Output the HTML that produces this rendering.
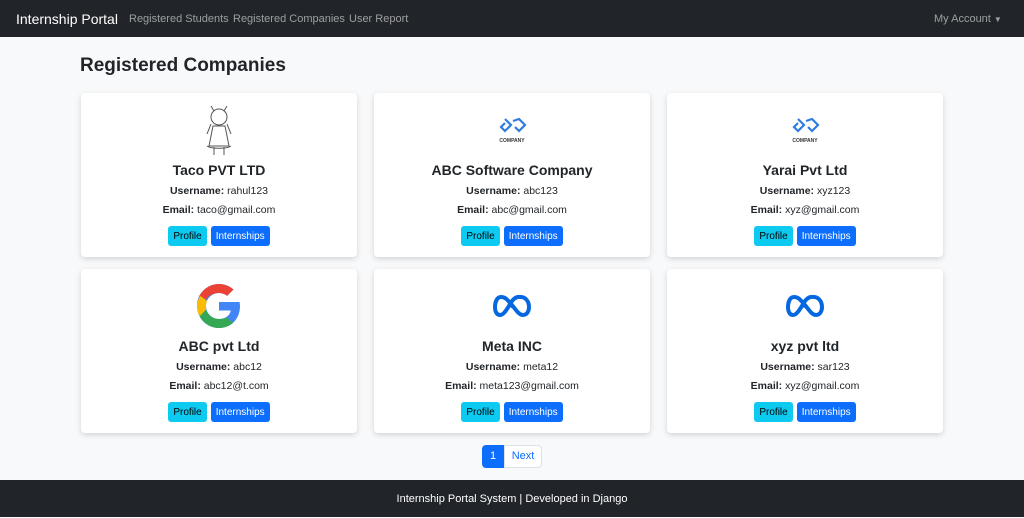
<!DOCTYPE html>
<html><head><meta charset="utf-8"><style>
*{box-sizing:border-box;margin:0;padding:0}
body{width:1024px;height:517px;background:#f8f9fa;font-family:"Liberation Sans",sans-serif;color:#212529;position:relative;overflow:hidden}
.nav{position:absolute;left:0;top:0;width:1024px;height:37px;background:#212529}
.nav span{position:absolute;top:1px;line-height:37px;color:rgba(255,255,255,.55);font-size:11px;white-space:nowrap}
.brand{color:#fff!important;font-size:14px!important;left:16px}
h1{position:absolute;left:80px;top:55px;font-size:19px;font-weight:bold;color:#212529}
.card{position:absolute;width:276px;height:164px;background:#fff;border-radius:4px;box-shadow:0 2px 6px rgba(0,0,0,.15);text-align:center}
.logo{position:absolute;left:0;right:0;top:7px;height:60px;display:flex;justify-content:center;align-items:center}
.t{position:absolute;left:0;right:0;top:69px;font-size:14px;font-weight:bold;color:#212529;line-height:16px}
.u{position:absolute;left:0;right:0;top:91px;font-size:10.5px;line-height:14px}
.e{position:absolute;left:0;right:0;top:110px;font-size:10.5px;line-height:14px}
.b{position:absolute;left:0;right:0;top:133px;height:20px;display:flex;justify-content:center;gap:4px}
.b span{display:block;height:20px;line-height:21px;font-size:10px;padding:0 5px;border-radius:3px}
.p{background:#0dcaf0;color:#000}
.i{background:#0d6efd;color:#fff}
.pg{position:absolute;top:445px;height:23px;line-height:23px;font-size:11px;text-align:center}
.foot{position:absolute;left:0;top:480px;width:1024px;height:37px;background:#212529;color:#fff;font-size:11px;text-align:center;line-height:38px}
</style></head><body>
<div class="nav">
<span class="brand">Internship Portal</span>
<span style="left:129px">Registered Students</span>
<span style="left:233px">Registered Companies</span>
<span style="left:349px">User Report</span>
<span style="left:934px">My Account <span style="position:static;font-size:8px">▼</span></span>
</div>
<h1>Registered Companies</h1>

<div class="card" style="left:81px;top:93px">
<div class="logo"><svg width="40" height="56" viewBox="0 0 40 56" fill="none" stroke="#555" stroke-width="1"><path d="M12 4l3 5M28 4l-3 5"/><circle cx="20" cy="15" r="8"/><path d="M12 22l-4 10M28 22l4 10M14 24h12l4 20H10z"/><path d="M8 44c4 3 20 3 24 0M15 45v8M25 45v8"/></svg></div>
<div class="t">Taco PVT LTD</div>
<div class="u"><b>Username:</b> rahul123</div>
<div class="e"><b>Email:</b> taco@gmail.com</div>
<div class="b"><span class="p">Profile</span><span class="i">Internships</span></div></div>

<div class="card" style="left:374px;top:93px">
<div class="logo"><svg width="34" height="30" viewBox="0 0 34 30"><path d="M10 4l6 6-6 6-4-4 4-4M18 6l6-2 6 6-6 6-4-4" fill="none" stroke="#2f7de1" stroke-width="2.2"/><text x="17" y="27" font-size="5" font-weight="bold" text-anchor="middle" fill="#333" font-family="Liberation Sans">COMPANY</text></svg></div>
<div class="t">ABC Software Company</div>
<div class="u"><b>Username:</b> abc123</div>
<div class="e"><b>Email:</b> abc@gmail.com</div>
<div class="b"><span class="p">Profile</span><span class="i">Internships</span></div></div>

<div class="card" style="left:667px;top:93px">
<div class="logo"><svg width="34" height="30" viewBox="0 0 34 30"><path d="M10 4l6 6-6 6-4-4 4-4M18 6l6-2 6 6-6 6-4-4" fill="none" stroke="#2f7de1" stroke-width="2.2"/><text x="17" y="27" font-size="5" font-weight="bold" text-anchor="middle" fill="#333" font-family="Liberation Sans">COMPANY</text></svg></div>
<div class="t">Yarai Pvt Ltd</div>
<div class="u"><b>Username:</b> xyz123</div>
<div class="e"><b>Email:</b> xyz@gmail.com</div>
<div class="b"><span class="p">Profile</span><span class="i">Internships</span></div></div>

<div class="card" style="left:81px;top:269px">
<div class="logo"><svg width="48" height="48" viewBox="0 0 48 48"><path d="M44.5 20H24v8.5h11.8C34.7 33.9 30.1 37 24 37c-7.2 0-13-5.8-13-13s5.8-13 13-13c3.1 0 5.9 1.1 8.1 2.9l6.4-6.4C34.6 4.1 29.6 2 24 2 11.8 2 2 11.8 2 24s9.8 22 22 22c11 0 21-8 21-22 0-1.3-.2-2.7-.5-4z" fill="#4285f4"/><path d="M3.2 13.7l7 5.1C12.1 14.3 17.7 11 24 11c3.1 0 5.9 1.1 8.1 2.9l6.4-6.4C34.6 4.1 29.6 2 24 2 15.6 2 8.3 6.7 4.6 13.7z" fill="#ea4335"/><path d="M24 46c5.5 0 10.4-1.9 14.1-5.1l-6.6-5.5C29.5 36.8 26.9 37 24 37c-6 0-11.1-3.9-12.9-9.4l-7 5.4C7.7 40.7 15.3 46 24 46z" fill="#34a853"/><path d="M11.1 27.6C10.4 26.4 11 25.3 11 24s.4-3.4 1-5.2l-7-5.1C3.7 16.8 2 20.3 2 24s1 7.2 2.6 10.3z" fill="#fbbc05"/></svg></div>
<div class="t">ABC pvt Ltd</div>
<div class="u"><b>Username:</b> abc12</div>
<div class="e"><b>Email:</b> abc12@t.com</div>
<div class="b"><span class="p">Profile</span><span class="i">Internships</span></div></div>

<div class="card" style="left:374px;top:269px">
<div class="logo"><svg width="40" height="24" viewBox="0 0 40 24"><path d="M20 12C15 4 12 3 9 3 5 3 3 8 3 13s2 8 5 8c4 0 7-6 12-14 4-5 7-4 9-4 4 0 8 4 8 10 0 4-2 8-6 8-4 0-7-5-11-10" fill="none" stroke="#0668e1" stroke-width="4" stroke-linecap="round"/></svg></div>
<div class="t">Meta INC</div>
<div class="u"><b>Username:</b> meta12</div>
<div class="e"><b>Email:</b> meta123@gmail.com</div>
<div class="b"><span class="p">Profile</span><span class="i">Internships</span></div></div>

<div class="card" style="left:667px;top:269px">
<div class="logo"><svg width="40" height="24" viewBox="0 0 40 24"><path d="M20 12C15 4 12 3 9 3 5 3 3 8 3 13s2 8 5 8c4 0 7-6 12-14 4-5 7-4 9-4 4 0 8 4 8 10 0 4-2 8-6 8-4 0-7-5-11-10" fill="none" stroke="#0668e1" stroke-width="4" stroke-linecap="round"/></svg></div>
<div class="t">xyz pvt ltd</div>
<div class="u"><b>Username:</b> sar123</div>
<div class="e"><b>Email:</b> xyz@gmail.com</div>
<div class="b"><span class="p">Profile</span><span class="i">Internships</span></div></div>

<div class="pg" style="left:482px;width:22px;background:#0d6efd;color:#fff;border-radius:4px 0 0 4px">1</div>
<div class="pg" style="left:504px;width:38px;background:#fff;color:#0d6efd;border:1px solid #dee2e6;border-radius:0 4px 4px 0;line-height:21px">Next</div>

<div class="foot">Internship Portal System | Developed in Django</div>
</body></html>
